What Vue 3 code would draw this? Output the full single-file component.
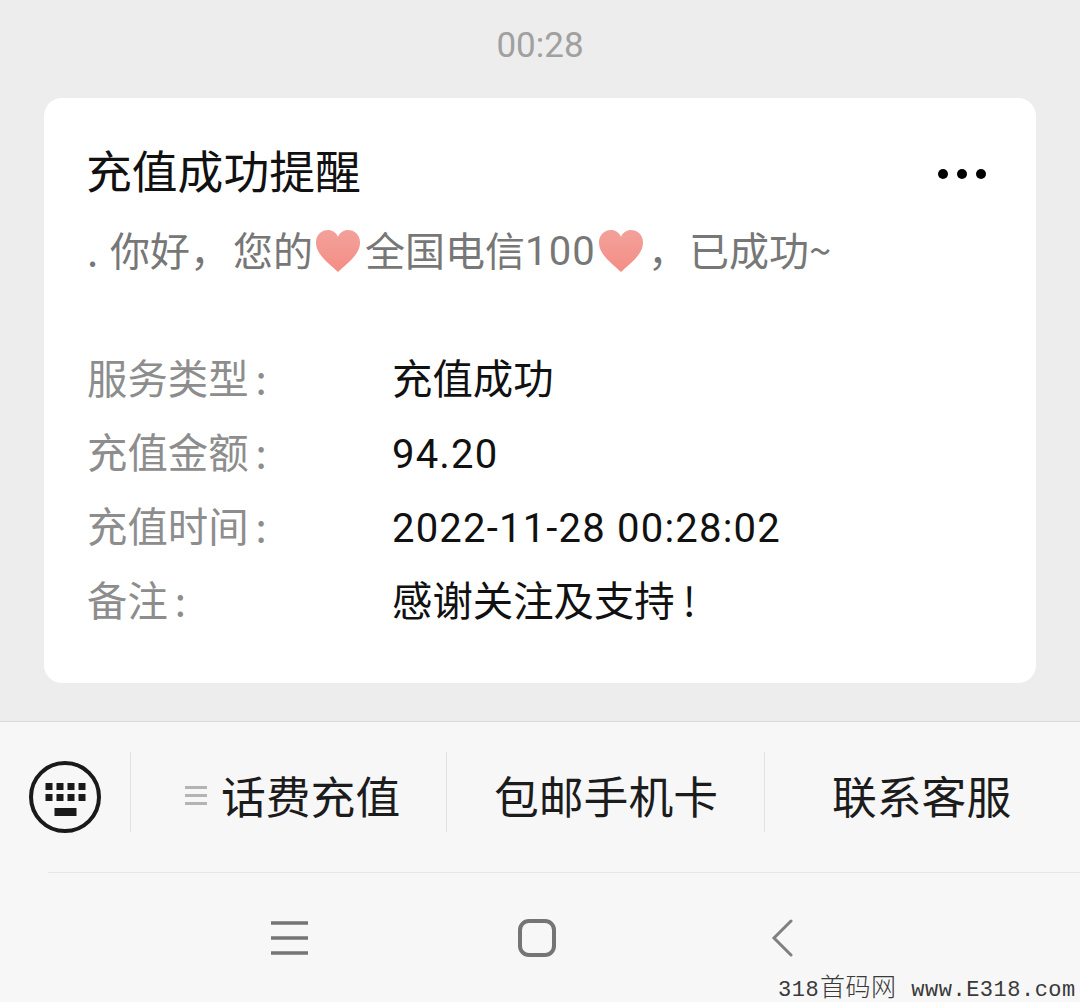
<template>
  <div class="screen">
    <section class="chat">
      <div class="time">00:28</div>
      <article class="card">
        <header class="card-head">
          <h1 class="title">充值成功提醒</h1>
          <div class="more"><i></i><i></i><i></i></div>
        </header>
        <p class="intro">
          <span class="dot">.</span><span>你好</span><span class="comma">，</span><span>您的</span>
          <svg class="heart" viewBox="0 0 48 48"><use href="#heart-shape" /></svg>
          <span>全国电信</span><span class="num">100</span>
          <svg class="heart" viewBox="0 0 48 48"><use href="#heart-shape" /></svg>
          <span class="comma second">，</span><span>已成功~</span>
        </p>
        <dl class="rows">
          <template v-for="row in rows" :key="row.label">
            <dt>{{ row.label }}</dt>
            <dd :class="{ num: row.num, bang: row.bang }">{{ row.value }}</dd>
          </template>
        </dl>
      </article>
    </section>

    <section class="bottom">
      <div class="menu">
        <div class="kbd">
          <svg width="74" height="74" viewBox="0 0 74 74">
            <circle cx="36" cy="37" r="34" fill="none" stroke="#1a1a1a" stroke-width="4" />
            <g fill="#1a1a1a">
              <rect v-for="k in keys" :key="k.x + '-' + k.y" :x="k.x" :y="k.y" width="7" height="7" />
              <rect x="25.500" y="48" width="22" height="8" />
            </g>
          </svg>
        </div>
        <div class="menu-item first"><span class="lines"><i></i><i></i><i></i></span>话费充值</div>
        <div class="menu-item second">包邮手机卡</div>
        <div class="menu-item last">联系客服</div>
      </div>
      <div class="nav">
        <svg width="40" height="38" viewBox="0 0 40 38" fill="none" stroke="#757575" stroke-width="3.5">
          <path d="M1 4h37M1 19h37M1 34h37" />
        </svg>
        <svg class="nav-home" width="38" height="38" viewBox="0 0 38 38" fill="none" stroke="#757575" stroke-width="4">
          <rect x="2" y="2" width="34" height="34" rx="9" />
        </svg>
        <svg class="nav-back" width="22" height="38" viewBox="0 0 22 38" fill="none" stroke="#808080" stroke-width="3" stroke-linecap="round">
          <path d="M20 2 3 19l17 17" />
        </svg>
      </div>
      <div class="mark">318<span>首码网</span> www.E318.com</div>
    </section>

    <svg class="defs" width="0" height="0">
      <defs>
        <linearGradient id="heart-fill" x1="0" y1="0" x2="0" y2="1">
          <stop offset="0" stop-color="#f3a19b" />
          <stop offset="1" stop-color="#f48d85" />
        </linearGradient>
        <path id="heart-shape" fill="url(#heart-fill)" d="M24 46C15 37 1 28 1 15 1 7 7 2 13.500 2 18 2 22 4.500 24 9c2-4.500 6-7 10.500-7C41 2 47 7 47 15c0 13-14 22-23 31Z" />
      </defs>
    </svg>
  </div>
</template>

<script setup>
const rows = [
  { label: '服务类型', value: '充值成功' },
  { label: '充值金额', value: '94.20', num: true },
  { label: '充值时间', value: '2022-11-28 00:28:02', num: true },
  { label: '备注', value: '感谢关注及支持', bang: true }
]

// 键盘图标的两排按键
const keys = []
for (const y of [23, 34]) {
  for (const x of [16.5, 27.5, 38.5, 49.5]) keys.push({ x, y })
}
</script>

<style scoped>
.screen {
  width: 1080px;
  height: 1002px;
  overflow: hidden;
  display: flex;
  flex-direction: column;
  font-family: "Noto Sans CJK SC", "Noto Sans", sans-serif;
  background: #f7f7f7;
}

.chat {
  height: 722px;
  flex: none;
  box-sizing: border-box;
  background: #ededed;
  border-bottom: 1px solid #d9d9d9;
  padding: 24px 44px 0;
}

.time {
  height: 40px;
  line-height: 44px;
  text-align: center;
  font-family: Roboto, sans-serif;
  font-size: 35px;
  color: #a0a0a0;
}

.card {
  margin-top: 34px;
  height: 585px;
  box-sizing: border-box;
  background: #fff;
  border-radius: 18px;
  padding: 43px 44px 0 43px;
}

.card-head {
  display: flex;
  justify-content: space-between;
  align-items: center;
  height: 60px;
}

.title {
  margin: 0 0 4px -1px;
  font-size: 45.8px;
  font-weight: 400;
  line-height: 60px;
  color: #111;
}

.more {
  display: flex;
  gap: 9px;
  margin: 5px 6px 0 0;
}

.more i {
  width: 10px;
  height: 10px;
  border-radius: 50%;
  background: #000;
}

.intro {
  margin: 20px 0 0;
  height: 56px;
  line-height: 56px;
  font-size: 40px;
  color: #777;
  white-space: nowrap;
  display: flex;
  align-items: center;
}

.dot {
  width: 23px;
}

.comma {
  width: 43px;
  flex: none;
}

.comma.second {
  width: 41px;
}

.intro .num {
  font-family: Roboto, sans-serif;
  letter-spacing: 1.2px;
  margin-top: 6px;
}

.heart {
  width: 46px;
  height: 46px;
  flex: none;
  margin: 4px 4px 0 2px;
}

.rows {
  margin: 63px 0 0;
  display: grid;
  grid-template-columns: 305px 1fr;
  grid-auto-rows: 74px;
  font-size: 40.4px;
  line-height: 74px;
}

.rows dt {
  color: #8d8d8d;
}

.rows dt::after {
  content: ":";
  margin-left: 7px;
}

.rows dd {
  margin: 0;
  color: #111;
  white-space: nowrap;
}

.rows dd.num {
  font-family: Roboto, sans-serif;
  font-size: 40px;
  letter-spacing: 1.2px;
  line-height: 82px;
}

.rows dd.bang::after {
  content: "!";
  margin-left: 8px;
}

.bottom {
  flex: 1;
  position: relative;
}

.menu {
  height: 151px;
  box-sizing: border-box;
  display: flex;
  align-items: center;
  border-bottom: 1px solid #e6e6e6;
  margin-left: 48px;
  font-size: 44.8px;
  color: #1c1c1c;
}

.kbd {
  width: 101px;
  margin-left: -19px;
  flex: none;
}

.kbd svg {
  display: block;
}

.menu-item {
  height: 80px;
  line-height: 86px;
  margin-bottom: 10px;
  border-left: 1px solid #e2e2e2;
  box-sizing: border-box;
  flex: none;
  white-space: nowrap;
}

.menu-item.first {
  width: 316px;
  padding: 6px 0 0 54px;
  line-height: 80px;
  display: flex;
  align-items: center;
}

.menu-item.second {
  width: 318px;
  padding-left: 47px;
}

.menu-item.last {
  padding-left: 67px;
}

.lines {
  display: flex;
  flex-direction: column;
  gap: 5px;
  width: 22px;
  margin: 0 14px 0 0;
}

.lines i {
  height: 3px;
  background: #b4b4b4;
}

.nav {
  height: 129px;
  padding: 46px 0 0 270px;
  display: flex;
  align-items: flex-start;
  box-sizing: border-box;
}

.nav-home {
  margin-left: 208px;
}

.nav-back {
  margin-left: 215px;
}

.mark {
  position: absolute;
  left: 778px;
  bottom: -2px;
  font-family: "Liberation Mono", monospace;
  font-size: 22px;
  line-height: 26px;
  letter-spacing: 0.5px;
  color: #3a3a3a;
  white-space: nowrap;
}

.mark span {
  font-family: "Noto Sans CJK SC", sans-serif;
  font-size: 25px;
  font-weight: 300;
  margin: 0 1px;
}

.defs {
  position: absolute;
}
</style>
